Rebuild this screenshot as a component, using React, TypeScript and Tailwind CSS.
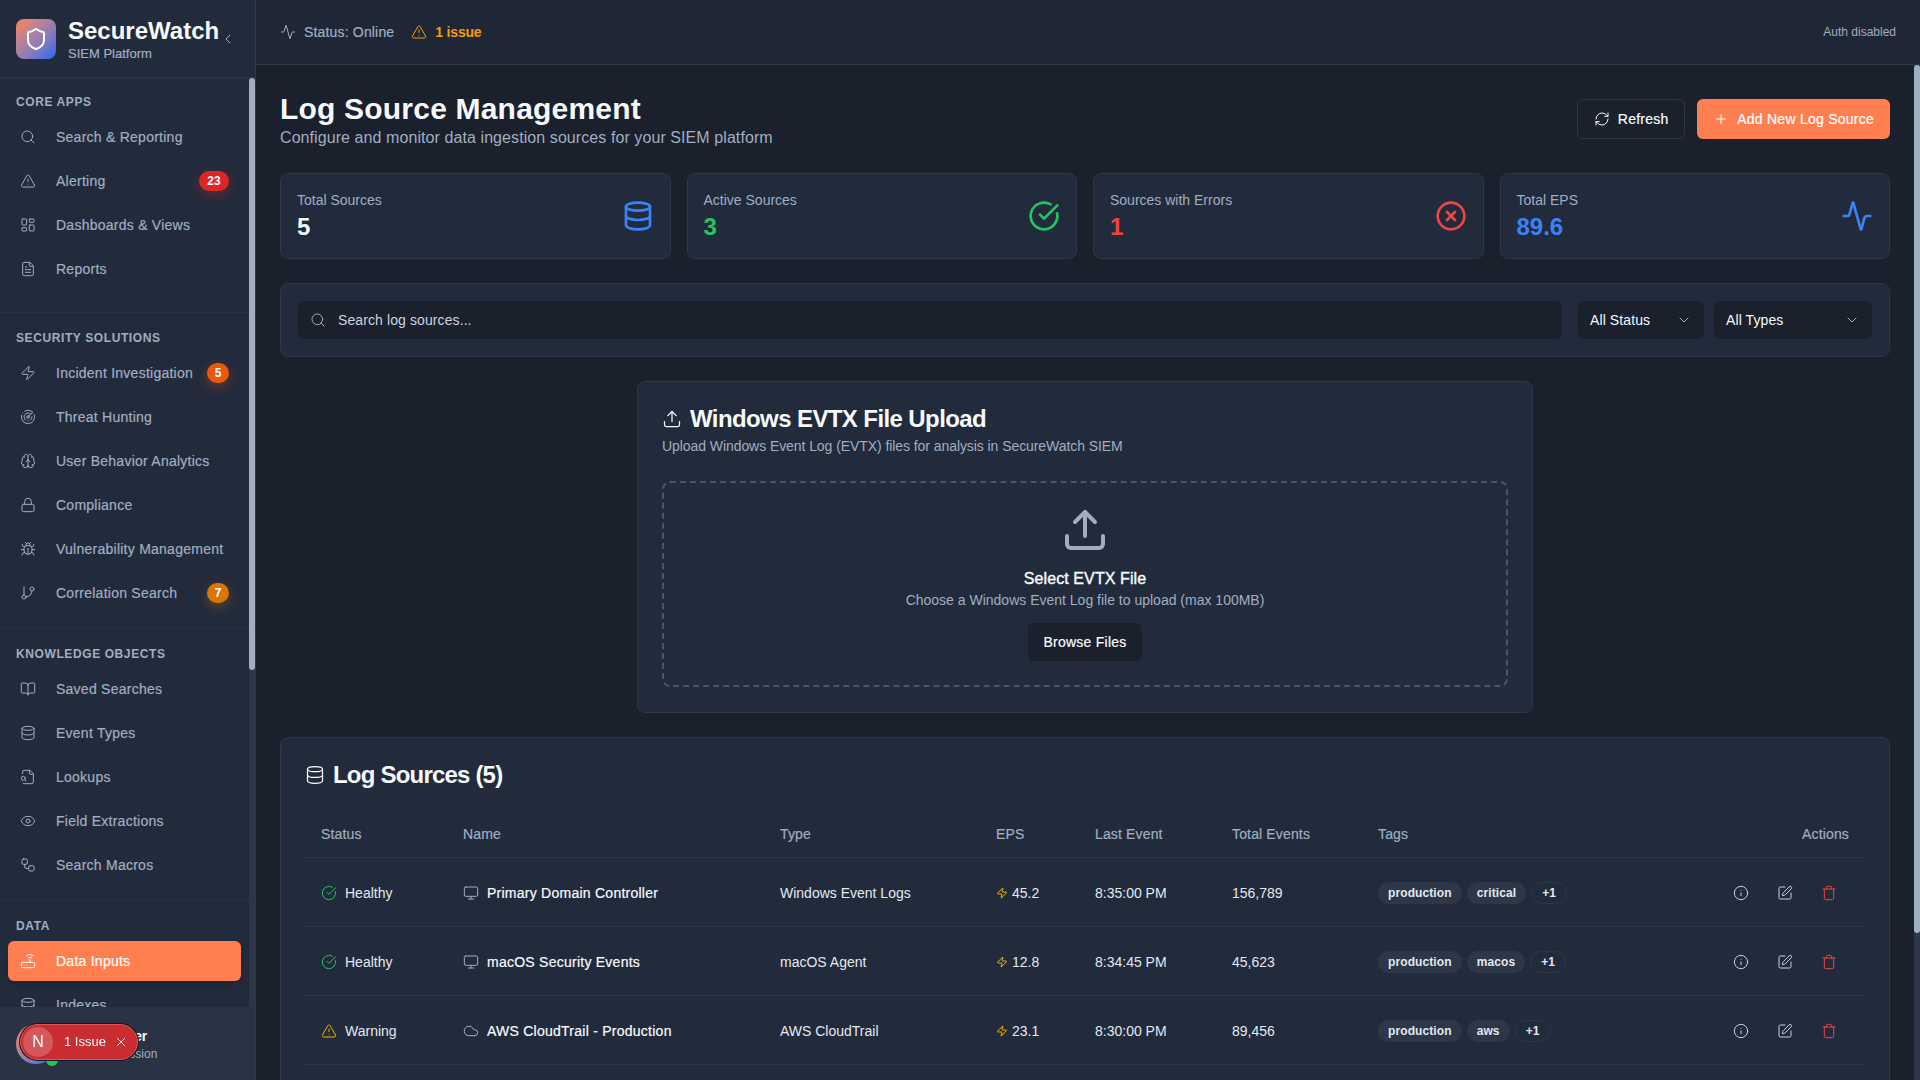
import React from "react";
import {
  Shield, ChevronLeft, ChevronDown, Search, TriangleAlert, LayoutDashboard, FileText, Zap, Radar, Brain, Lock, Bug, GitBranch,
  BookOpen, Database, Eye, Workflow, Router, Activity, RefreshCw, Plus, CircleCheckBig, CircleX, Upload, Monitor,
  Cloud, Info, SquarePen, Trash, X, Users, Settings, Server, Bell, HardDrive, Key, Layers, Clock,
} from "lucide-react";

type Item = { label: string; icon: React.ElementType; badge?: string; badgeClass?: string; active?: boolean };
type Section = { title: string; pb: string; items: Item[] };

// Liberation Sans has no medium cut: a hair of stroke and tracking stands in for it.
const medium = "tracking-[0.25px] [-webkit-text-stroke:0.2px]";

function LookupIcon({ className }: { className?: string }) {
  return (
    <svg viewBox="0 0 24 24" fill="none" stroke="currentColor" strokeWidth={1.5} strokeLinecap="round" strokeLinejoin="round" className={className}>
      <path d="M14 2v4a2 2 0 0 0 2 2h4" />
      <path d="M4.268 21a2 2 0 0 0 1.727 1H18a2 2 0 0 0 2-2V7l-5-5H6a2 2 0 0 0-2 2v3" />
      <path d="m9 18-1.5-1.5" />
      <circle cx="5" cy="14" r="3" />
    </svg>
  );
}

const sections: Section[] = [
  {
    title: "Core Apps",
    pb: "pb-[23px]",
    items: [
      { label: "Search & Reporting", icon: Search },
      { label: "Alerting", icon: TriangleAlert, badge: "23", badgeClass: "bg-[#dc2626] shadow-[0_4px_12px_rgba(220,38,38,0.35)] w-[30px]" },
      { label: "Dashboards & Views", icon: LayoutDashboard },
      { label: "Reports", icon: FileText },
    ],
  },
  {
    title: "Security Solutions",
    pb: "pb-[15px]",
    items: [
      { label: "Incident Investigation", icon: Zap, badge: "5", badgeClass: "bg-[#ea580c] shadow-[0_4px_12px_rgba(234,88,12,0.35)] w-[22px]" },
      { label: "Threat Hunting", icon: Radar },
      { label: "User Behavior Analytics", icon: Brain },
      { label: "Compliance", icon: Lock },
      { label: "Vulnerability Management", icon: Bug },
      { label: "Correlation Search", icon: GitBranch, badge: "7", badgeClass: "bg-[#d97706] shadow-[0_4px_12px_rgba(217,119,6,0.35)] w-[22px]" },
    ],
  },
  {
    title: "Knowledge Objects",
    pb: "pb-[15px]",
    items: [
      { label: "Saved Searches", icon: BookOpen },
      { label: "Event Types", icon: Database },
      { label: "Lookups", icon: LookupIcon },
      { label: "Field Extractions", icon: Eye },
      { label: "Search Macros", icon: Workflow },
    ],
  },
  {
    title: "Data",
    pb: "pb-[15px]",
    items: [
      { label: "Data Inputs", icon: Router, active: true },
      { label: "Indexes", icon: Database },
      { label: "Source Types", icon: Layers },
    ],
  },
  {
    title: "Monitoring",
    pb: "pb-[15px]",
    items: [
      { label: "Health", icon: Activity },
      { label: "Forwarders", icon: Server },
      { label: "Storage", icon: HardDrive },
      { label: "Jobs", icon: Clock },
    ],
  },
  {
    title: "Administration",
    pb: "pb-[15px]",
    items: [
      { label: "Users", icon: Users },
      { label: "Roles", icon: Key },
      { label: "Notifications", icon: Bell },
      { label: "Settings", icon: Settings },
    ],
  },
];

const stats = [
  { label: "Total Sources", value: "5", color: "text-[#f7fafc]", icon: Database, iconColor: "text-[#3b82f6]" },
  { label: "Active Sources", value: "3", color: "text-[#22c55e]", icon: CircleCheckBig, iconColor: "text-[#22c55e]" },
  { label: "Sources with Errors", value: "1", color: "text-[#ef4444]", icon: CircleX, iconColor: "text-[#ef4444]" },
  { label: "Total EPS", value: "89.6", color: "text-[#3b82f6]", icon: Activity, iconColor: "text-[#3b82f6]" },
];

const rows = [
  { status: "Healthy", name: "Primary Domain Controller", nameIcon: Monitor, type: "Windows Event Logs", eps: "45.2", last: "8:35:00 PM", total: "156,789", tags: ["production", "critical"] },
  { status: "Healthy", name: "macOS Security Events", nameIcon: Monitor, type: "macOS Agent", eps: "12.8", last: "8:34:45 PM", total: "45,623", tags: ["production", "macos"] },
  { status: "Warning", name: "AWS CloudTrail - Production", nameIcon: Cloud, type: "AWS CloudTrail", eps: "23.1", last: "8:30:00 PM", total: "89,456", tags: ["production", "aws"] },
  { status: "Healthy", name: "Firewall Syslog", nameIcon: Server, type: "Syslog", eps: "8.5", last: "8:29:30 PM", total: "34,210", tags: ["production", "network"] },
  { status: "Error", name: "Linux Audit Logs", nameIcon: Server, type: "Linux Agent", eps: "0.0", last: "7:12:10 PM", total: "12,044", tags: ["staging", "linux"] },
];

function NavRow({ item }: { item: Item }) {
  const Icon = item.icon;
  return (
    <div
      className={
        item.active
          ? "flex h-10 items-center gap-5 rounded-md bg-[#ff7f50] pl-3 pr-3 text-sm text-white shadow-md"
          : "flex h-10 items-center gap-5 rounded-md pl-3 pr-3 text-sm text-[#a0aec0]"
      }
    >
      <Icon className="h-4 w-4 shrink-0" strokeWidth={1.5} />
      <span className={"min-w-0 flex-1 whitespace-nowrap " + medium}>{item.label}</span>
      {item.badge && (
        <span className={"flex h-5 shrink-0 items-center justify-center rounded-full text-xs font-bold text-white " + item.badgeClass}>{item.badge}</span>
      )}
    </div>
  );
}

function Sidebar() {
  return (
    <aside className="flex h-screen w-[256px] shrink-0 flex-col border-r border-[#2d3748] bg-[#222b3c]">
      <div className="flex h-[78px] shrink-0 items-center border-b border-[#2d3748] pl-4">
        <div className="flex h-10 w-10 shrink-0 items-center justify-center rounded-lg bg-gradient-to-br from-[#ff7f50] to-[#2563eb]">
          <Shield className="h-6 w-6 text-white" strokeWidth={2} />
        </div>
        <div className="mt-px ml-3 min-w-0">
          <div className="text-2xl leading-7 font-bold whitespace-nowrap text-[#f7fafc]">SecureWatch</div>
          <div className="mt-px text-[13px] leading-4 text-[#a0aec0] [-webkit-text-stroke:0.2px]">SIEM Platform</div>
        </div>
        <ChevronLeft className="ml-px h-4 w-4 shrink-0 text-[#a0aec0]" strokeWidth={1.5} />
      </div>
      <div className="flex min-h-0 flex-1">
        <nav className="min-w-0 flex-1 overflow-y-scroll">
          {sections.map((s, i) => (
            <div key={s.title} className={(i === 0 ? "pt-[15px] " : "border-t border-[#2a3342] pt-4 ") + s.pb}>
              <div className="mb-[7px] px-4 pt-px text-xs font-bold tracking-wider text-[#a0aec0] uppercase">{s.title}</div>
              <div className="mx-2 flex flex-col gap-1">
                {s.items.map((it) => (
                  <NavRow key={it.label} item={it} />
                ))}
              </div>
            </div>
          ))}
        </nav>
        <div className="w-[6px] shrink-0 bg-[#2d3748]">
          <div className="h-[592px] rounded-full bg-[#a0aec0]" />
        </div>
      </div>
      <div className="flex h-[73px] shrink-0 items-center bg-[#2a3344] pl-4">
        <div className="relative h-10 w-10 shrink-0 rounded-full bg-gradient-to-br from-[#ff7f50] to-[#2563eb]">
          <span className="absolute right-[-2px] bottom-[-2px] h-3 w-3 rounded-full bg-[#22c55e]" />
        </div>
        <div className="ml-3">
          <div className="text-sm leading-5 font-semibold tracking-[-0.3px] text-[#f7fafc]">Default User</div>
          <div className="text-xs text-[#a0aec0]">Security Session</div>
        </div>
      </div>
    </aside>
  );
}

function Stat({ s }: { s: (typeof stats)[number] }) {
  const Icon = s.icon;
  return (
    <div className="flex items-center justify-between rounded-lg border border-[#2d3748] bg-[#222b3c] px-4 pt-4 pb-[15px]">
      <div>
        <div className="text-sm leading-5 text-[#a0aec0]">{s.label}</div>
        <div className={"pt-px text-2xl leading-8 font-bold " + s.color}>{s.value}</div>
      </div>
      <Icon className={"mb-[2px] h-8 w-8 " + s.iconColor} strokeWidth={2} />
    </div>
  );
}

function StatusCell({ status }: { status: string }) {
  const Icon = status === "Healthy" ? CircleCheckBig : status === "Warning" ? TriangleAlert : CircleX;
  const color = status === "Healthy" ? "text-[#22c55e]" : status === "Warning" ? "text-[#eab308]" : "text-[#ef4444]";
  return (
    <div className="flex items-center gap-2">
      <Icon className={"h-4 w-4 " + color} strokeWidth={1.5} />
      <span>{status}</span>
    </div>
  );
}

function Table() {
  const th = "h-[45px] px-4 text-left text-sm font-normal tracking-[0.15px] [-webkit-text-stroke:0.2px] text-[#a0aec0]";
  return (
    <table className="w-full table-fixed text-sm text-[#e2e8f0]">
      <thead>
        <tr className="border-b border-[#2d3748]">
          <th className={th + " w-[142px]"}>Status</th>
          <th className={th + " w-[317px]"}>Name</th>
          <th className={th + " w-[216px]"}>Type</th>
          <th className={th + " w-[99px]"}>EPS</th>
          <th className={th + " w-[137px]"}>Last Event</th>
          <th className={th + " w-[146px]"}>Total Events</th>
          <th className={th + " w-[330px]"}>Tags</th>
          <th className={th + " text-right"}>Actions</th>
        </tr>
      </thead>
      <tbody>
        {rows.map((r) => {
          const NameIcon = r.nameIcon;
          return (
            <tr key={r.name} className="h-[69px] border-b border-[#2d3748] [&>td]:pt-[2px]">
              <td className="px-4"><StatusCell status={r.status} /></td>
              <td className="px-4">
                <div className="flex items-center gap-2">
                  <NameIcon className="h-4 w-4 shrink-0 text-[#a0aec0]" strokeWidth={1.5} />
                  <span className={"whitespace-nowrap text-[#f7fafc] " + medium}>{r.name}</span>
                </div>
              </td>
              <td className="px-4">{r.type}</td>
              <td className="px-4">
                <div className="flex items-center gap-1">
                  <Zap className="h-3 w-3 text-[#eab308]" strokeWidth={2} />
                  <span>{r.eps}</span>
                </div>
              </td>
              <td className="px-4 whitespace-nowrap">{r.last}</td>
              <td className="px-4">{r.total}</td>
              <td className="px-4">
                <div className="flex items-center gap-[5px] text-xs font-bold tracking-[0.1px]">
                  {r.tags.map((t) => (
                    <span key={t} className="flex h-[22px] items-center rounded-full bg-[#2d3748] px-[10px] text-[#e2e8f0]">{t}</span>
                  ))}
                  <span className="flex h-[22px] items-center rounded-full border border-[#2d3748] px-[10px] text-[#e2e8f0]">+1</span>
                </div>
              </td>
              <td className="pr-[28px]">
                <div className="flex items-center justify-end gap-7 text-[#cbd5e0]">
                  <Info className="h-4 w-4" strokeWidth={1.5} />
                  <SquarePen className="h-4 w-4" strokeWidth={1.5} />
                  <Trash className="h-4 w-4 text-[#ef4444]" strokeWidth={1.5} />
                </div>
              </td>
            </tr>
          );
        })}
      </tbody>
    </table>
  );
}

export default function App() {
  return (
    <div className="flex h-screen w-full overflow-hidden bg-[#1a202c] font-['Liberation_Sans',Arial,sans-serif]">
      <Sidebar />
      <div className="flex min-w-0 flex-1 flex-col">
        <header className="flex h-[65px] shrink-0 items-center justify-between border-b border-[#2d3748] bg-[#1f2635] px-6">
          <div className="flex items-center text-sm">
            <Activity className="h-4 w-4 text-[#a0aec0]" strokeWidth={1.5} />
            <span className="ml-2 tracking-[0.17px] text-[#a0aec0] [-webkit-text-stroke:0.2px]">Status: Online</span>
            <TriangleAlert className="ml-[17px] h-4 w-4 text-[#f59e0b]" strokeWidth={1.5} />
            <span className="ml-2 font-semibold tracking-[-0.2px] text-[#f59e0b]">1 issue</span>
          </div>
          <span className="text-xs text-[#a0aec0]">Auth disabled</span>
        </header>
        <div className="flex min-h-0 flex-1">
          <main className="min-w-0 flex-1 overflow-y-scroll px-6 pt-[25px] pb-6">
            <div className="flex items-start justify-between">
              <div>
                <h1 className="-mb-px pt-px text-3xl leading-9 font-bold tracking-[0.2px] text-[#f7fafc]">Log Source Management</h1>
                <p className="text-base leading-6 tracking-[0.08px] text-[#a0aec0]">Configure and monitor data ingestion sources for your SIEM platform</p>
              </div>
              <div className="mt-[9px] flex items-center gap-3">
                <button className={"flex h-10 w-[108px] items-center justify-center gap-2 rounded-md border border-[#2d3748] text-sm text-[#f7fafc] " + medium}>
                  <RefreshCw className="h-4 w-4" strokeWidth={1.5} />
                  Refresh
                </button>
                <button className={"flex h-10 items-center gap-2 rounded-md bg-[#ff7f50] px-4 text-sm text-white " + medium}>
                  <Plus className="h-4 w-4" strokeWidth={1.5} />
                  Add New Log Source
                </button>
              </div>
            </div>

            <div className="mt-[23px] grid grid-cols-4 gap-4">
              {stats.map((s) => (
                <Stat key={s.label} s={s} />
              ))}
            </div>

            <div className="mt-6 flex items-center rounded-lg border border-[#2d3748] bg-[#222b3c] p-[17px]">
              <div className="flex h-[38px] flex-1 items-center rounded-md bg-[#1a202c] pl-3 text-sm tracking-[0.1px] text-[#cbd5e0]">
                <Search className="h-4 w-4 text-[#a0aec0]" strokeWidth={1.5} />
                <span className="ml-3">Search log sources...</span>
              </div>
              <div className="ml-4 flex h-[38px] w-[126px] items-center justify-between rounded-md bg-[#1a202c] px-3 text-sm tracking-[0.1px] text-[#f7fafc]">
                All Status
                <ChevronDown className="h-4 w-4 text-[#a0aec0]" strokeWidth={1.5} />
              </div>
              <div className="ml-[10px] flex h-[38px] w-[158px] items-center justify-between rounded-md bg-[#1a202c] px-3 text-sm tracking-[0.1px] text-[#f7fafc]">
                All Types
                <ChevronDown className="h-4 w-4 text-[#a0aec0]" strokeWidth={1.5} />
              </div>
            </div>

            <div className="mx-auto mt-6 max-w-4xl rounded-lg border border-[#2d3748] bg-[#222b3c] px-6 pt-5 pb-[25px]">
              <h2 className="-mb-px flex items-center gap-2 pt-px text-2xl leading-8 font-bold tracking-tight text-[#f7fafc]">
                <Upload className="h-5 w-5" strokeWidth={1.5} />
                Windows EVTX File Upload
              </h2>
              <p className="mt-0.5 text-sm leading-5 tracking-[-0.07px] text-[#a0aec0]">Upload Windows Event Log (EVTX) files for analysis in SecureWatch SIEM</p>
              <div className="mt-[25px] flex flex-col items-center rounded-lg border-2 border-dashed border-[#4a5568] p-6">
                <Upload className="-mt-px h-12 w-12 text-[#a0aec0]" strokeWidth={2} />
                <div className="mt-[13px] text-base leading-6 tracking-[0.1px] text-[#f7fafc] [-webkit-text-stroke:0.4px]">Select EVTX File</div>
                <div className="-mt-px text-sm leading-5 text-[#a0aec0]">Choose a Windows Event Log file to upload (max 100MB)</div>
                <button className={"mt-[13px] flex h-[38px] w-[114px] items-center justify-center rounded-md bg-[#1a202c] text-sm text-[#f7fafc] " + medium}>Browse Files</button>
              </div>
            </div>

            <div className="mt-6 rounded-lg border border-[#2d3748] bg-[#222b3c] px-6 pt-[21px] pb-6">
              <h2 className="flex items-center gap-2 text-2xl leading-8 font-bold tracking-[-0.8px] text-[#f7fafc]">
                <Database className="h-5 w-5" strokeWidth={1.5} />
                Log Sources (5)
              </h2>
              <div className="mt-[21px]">
                <Table />
              </div>
            </div>
          </main>
          <div className="w-[6px] shrink-0 bg-[#2d3748]">
            <div className="h-[868px] rounded-full bg-[#a0aec0]" />
          </div>
        </div>
      </div>

      <div className="fixed top-[1024px] left-[20px] flex h-9 w-[118px] items-center rounded-full border border-[#e25555] bg-[#c92d32] pl-[2px] text-white shadow-[0_0_0_1px_#111827]">
        <span className="flex h-[30px] w-[30px] items-center justify-center rounded-full bg-white/20 text-base">N</span>
        <span className="ml-[11px] text-[13px]">1 Issue</span>
        <X className="ml-2 h-[14px] w-[14px]" strokeWidth={1.5} />
      </div>
    </div>
  );
}
